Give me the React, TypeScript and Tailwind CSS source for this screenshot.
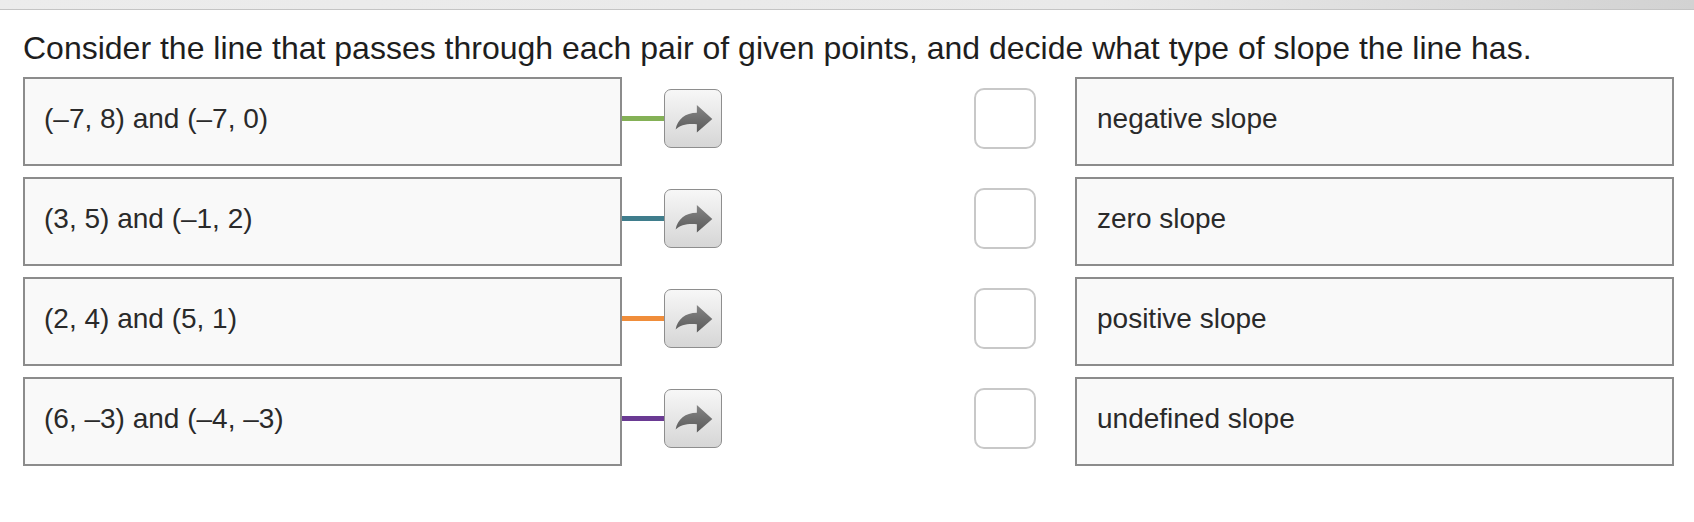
const rows = [
  { left: '(–7, 8) and (–7, 0)', right: 'negative slope', line: 'bg-[#84b156]' },
  { left: '(3, 5) and (–1, 2)', right: 'zero slope', line: 'bg-[#3f7d8c]' },
  { left: '(2, 4) and (5, 1)', right: 'positive slope', line: 'bg-[#f08d3a]' },
  { left: '(6, –3) and (–4, –3)', right: 'undefined slope', line: 'bg-[#6a3a93]' },
];

const ArrowButton = () => (
  <div className="w-[58px] h-[59px] shrink-0 rounded-[7px] border border-[#8e8e8e] bg-linear-to-b from-[#f7f7f7] to-[#d6d6d6] flex items-center justify-center">
    <svg width="58" height="59" viewBox="0 0 58 59">
      <defs>
        <linearGradient id="arr" x1="0" y1="0" x2="0" y2="1">
          <stop offset="0" stopColor="#858585" />
          <stop offset="1" stopColor="#5a5a5a" />
        </linearGradient>
      </defs>
      <path
        d="M11 41 C 13 30, 21 23.5, 33 23.5 L 33 15.5 L 49 30 L 33 44 L 33 35.5 C 24 34.5, 16 36, 11 41 Z"
        fill="url(#arr)"
      />
    </svg>
  </div>
);

export default function App() {
  return (
    <div className="min-h-screen bg-white text-[#222]" style={{ fontFamily: '"Liberation Sans", Arial, sans-serif' }}>
      <div className="h-[10px] bg-linear-to-r from-[#ececec] via-[#e9e9e9] via-65% to-[#d2d2d2] border-b border-[#c4c4c4]" />
      <div className="pl-[23px] pt-[19px]">
        <h1 className="text-[32px] leading-[38px] text-[#1e1e1e]">
          Consider the line that passes through each pair of given points, and decide what type of slope the line has.
        </h1>
        <div className="mt-[10px] flex flex-col gap-[11px]">
          {rows.map((r) => (
            <div key={r.left} className="flex items-center h-[89px]">
              <div className="w-[599px] h-full shrink-0 border-2 border-[#8c8c8c] bg-[#f9f9f9] pl-[19px] pt-[23px] text-[28px] leading-[34px] text-[#2a2a2a]">
                {r.left}
              </div>
              <div className="self-stretch flex items-center pb-[6px]">
                <div className={`w-[42px] h-[5px] ${r.line}`} />
                <div className="-mt-[1px]">
                  <ArrowButton />
                </div>
              </div>
              <div className="w-[252px] shrink-0" />
              <div className="w-[62px] h-[61px] shrink-0 rounded-[10px] border-2 border-[#c8c8c8] bg-white mb-[6px]" />
              <div className="w-[39px] shrink-0" />
              <div className="w-[599px] h-full shrink-0 border-2 border-[#8c8c8c] bg-[#f9f9f9] pl-[20px] pt-[23px] text-[28px] leading-[34px] text-[#2a2a2a]">
                {r.right}
              </div>
            </div>
          ))}
        </div>
      </div>
    </div>
  );
}
